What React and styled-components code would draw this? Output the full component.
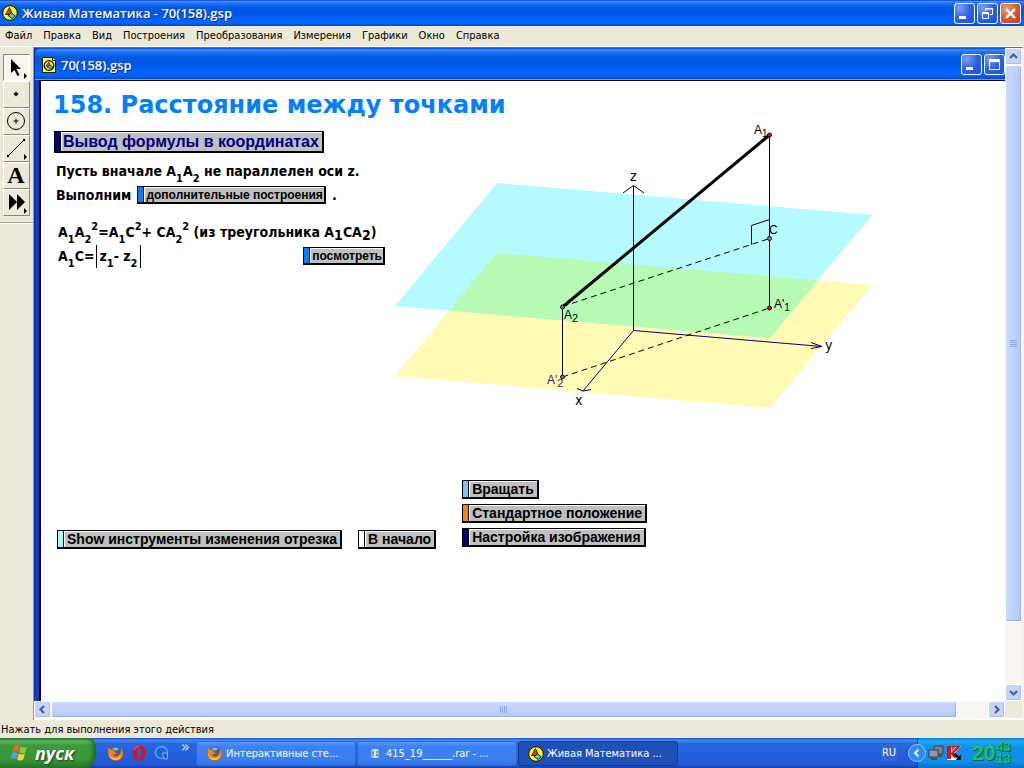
import React from "react";
import styled, { createGlobalStyle, css } from "styled-components";

const ui = '"DejaVu Sans Condensed", "DejaVu Sans", sans-serif';
const caption = '"Open Sans", "Noto Sans", sans-serif';
const arial = '"Liberation Sans", sans-serif';

const GlobalStyle = createGlobalStyle`
  * { box-sizing: border-box; }
  body { margin: 0; background: #ece9d8; font-family: ${ui}; font-size: 11px; color: #000; }
  button { font: inherit; color: inherit; margin: 0; padding: 0; border: 0; background: none; }
  svg { display: block; flex: none; }
`;

const Desktop = styled.div`
  display: flex;
  flex-direction: column;
  min-height: 100vh;
`;

const blueBar = css`
  background: linear-gradient(#0a3fd0 0, #3c90ff 6%, #1a70f4 14%, #0458e4 30%, #0055e5 50%, #0263fb 75%, #0566ff 88%, #0148c8 100%);
`;

const TitleBar = styled.header`
  ${blueBar}
  display: flex;
  align-items: center;
  gap: ${(p) => (p.$child ? 5 : 4)}px;
  height: ${(p) => (p.$child ? 32 : 26)}px;
  padding: ${(p) => (p.$child ? "2px 0 0 7px" : "0 3px 0 2px")};
  border-radius: ${(p) => (p.$child ? "6px 0 0 0" : "0")};
  ${(p) => p.$child && "border-bottom: 1px solid #8a94a8;"}
`;

const Caption = styled.h1`
  flex: 1;
  margin: 0;
  font: 600 13px ${caption};
  color: #fff;
  text-shadow: 1px 1px 0 #0a2a90;
  white-space: nowrap;
`;

const WindowButtons = styled.div`
  display: flex;
  gap: 2px;
`;

const WindowButton = styled.button`
  display: grid;
  place-items: center;
  width: 21px;
  height: 21px;
  border: 1px solid #fff;
  border-radius: 3px;
  background: ${(p) =>
    p.$close
      ? "radial-gradient(circle at 30% 25%, #f09a7c, #e0502c 55%, #c23a16)"
      : "radial-gradient(circle at 25% 20%, #7e9ff2, #2f62e4 50%, #1c50d8)"};
`;

const MenuBar = styled.nav`
  display: flex;
  gap: 11px;
  height: 21px;
  padding: 0 5px 1px;
  border-bottom: 1px solid #fff;
`;

const MenuItem = styled.button`
  line-height: 18px;
`;

const Main = styled.main`
  display: flex;
  flex: 1;
`;

const ToolPanel = styled.aside`
  flex: none;
  width: 34px;
  border-right: 1px solid #9a988c;
`;

const Tools = styled.div`
  display: flex;
  flex-direction: column;
  padding: 7px 3px 6px;
  border-bottom: 1px solid #aca899;
  box-shadow: 0 1px 0 #fff;
`;

const Tool = styled.button`
  width: 27px;
  height: 27px;
  border: 1px solid;
  border-color: #fff #8d8a7c #8d8a7c #fff;
  ${(p) => p.$on && "border-color: #8d8a7c #fff #fff #8d8a7c; background: #f6f5ef;"}
`;

const Workspace = styled.div`
  display: grid;
  grid-template-columns: 1fr 17px;
  grid-template-rows: 1fr 17px;
  flex: 1;
  border-top: 1px solid #716f64;
  border-right: 2px solid #f4f2ea;
  border-bottom: 2px solid #fff;
`;

const ChildWindow = styled.section`
  display: flex;
  flex-direction: column;
  min-width: 0;
  border-left: 1px solid #0831a8;
  background: #1040c0;
`;

const Sketch = styled.div`
  flex: 1;
  margin-left: 4px;
  padding: 8px 12px;
  border-top: 1px solid #000;
  border-left: 2px solid #000018;
  background: #fff;
`;

const Heading = styled.h2`
  margin: 0;
  font: bold 24px/33px "DejaVu Sans", sans-serif;
  color: #0080ff;
`;

const Figure = styled.div`
  display: flex;
  align-items: flex-start;
`;

const Notes = styled.div`
  flex: none;
  width: 342px;
  padding: 8px 10px 0 0;
  font-size: 14px;
  font-weight: bold;
`;

const Line = styled.div`
  display: flex;
  align-items: center;
  justify-content: ${(p) => (p.$spread ? "space-between" : "flex-start")};
  gap: 6px;
  height: 24px;
  padding-left: ${(p) => p.$indent || 3}px;
  margin-top: ${(p) => p.$top || 0}px;
  white-space: nowrap;
`;

const small = css`
  font-size: 11px;
  line-height: 0;
`;
const Sub = styled.sub`
  ${small}
  vertical-align: -6px;
`;
const Sup = styled.sup`
  ${small}
  vertical-align: 7px;
`;
const LowSub = styled.sub`
  font-size: 14px;
  line-height: 0;
  vertical-align: -3px;
`;
const Abs = styled.span`
  display: inline-block;
  margin-left: 2px;
  padding: 3px 2px 4px;
  border: solid #000;
  border-width: 0 1px;
`;

const ActionFrame = styled.button`
  display: inline-flex;
  flex: none;
  border: 1px solid #000;
  border-width: 1px 2px 2px 1px;
  font: bold 14px/15px ${arial};
  ${(p) => p.$size === "large" && "font-size: 16px; line-height: 18px;"}
  ${(p) => p.$size === "small" && "font-size: 12px; line-height: 14px;"}
  color: ${(p) => p.$ink || "#000"};
  white-space: nowrap;
`;
const Strip = styled.span`
  flex: none;
  width: 6px;
  border-right: 1px solid #000;
  background: ${(p) => p.$color};
`;
const Face = styled.span`
  padding: 0 ${(p) => (p.$size === "small" ? 1 : 3)}px 0 ${(p) => (p.$size ? 1 : 2)}px;
  border: solid #fff;
  border-width: 1px 0 0 1px;
  background: #c0c0c0;
`;

const Actions = styled.div`
  display: flex;
  align-items: flex-start;
  gap: 16px;
  padding: 66px 0 0 4px;
`;
const ActionRow = styled.div`
  display: flex;
  gap: 16px;
  padding-top: 50px;
`;
const ActionStack = styled.div`
  display: flex;
  flex-direction: column;
  align-items: flex-start;
  gap: 5px;
  margin-left: 10px;
`;

const ScrollBar = styled.div`
  display: flex;
  flex-direction: ${(p) => (p.$vertical ? "column" : "row")};
  background: #f6f5f0;
`;
const ScrollButton = styled.button`
  display: grid;
  place-items: center;
  flex: none;
  width: 17px;
  height: 17px;
  border: 1px solid #fff;
  border-radius: 2px;
  background: #c6d5fd;
  box-shadow: inset -1px -1px 0 #a8bcf0;
`;
const Thumb = styled.div`
  display: grid;
  place-items: center;
  flex: ${(p) => p.$share} 0 0;
  border: 1px solid #fff;
  border-radius: 2px;
  background: linear-gradient(${(p) => (p.$vertical ? "to right" : "to bottom")}, #cad8ff, #b6caf8);
  box-shadow: inset -1px -1px 0 #98b0e8;
`;
const Track = styled.div`
  flex: ${(p) => p.$share} 0 0;
`;

const StatusBar = styled.footer`
  height: 18px;
  padding: 1px 1px 0;
  line-height: 18px;
`;

const TaskBar = styled.footer`
  display: flex;
  height: 30px;
  background: linear-gradient(#1f4fc0 0, #3f8cf3 8%, #2a66e0 18%, #245edb 60%, #2258d4 88%, #1941a5 100%);
  color: #fff;
`;
const StartButton = styled.button`
  display: flex;
  align-items: center;
  gap: 6px;
  width: 96px;
  padding: 0 0 1px 10px;
  border-radius: 0 8px 12px 0;
  background: linear-gradient(#2f7a2f 0, #63b863 10%, #3c9a3c 25%, #379637 70%, #2a7a2a 100%);
  box-shadow: inset -3px 0 4px #1f6a1f;
  font: italic bold 18px ${caption};
  text-shadow: 1px 1px 2px #1a401a;
`;
const QuickLaunch = styled.div`
  display: flex;
  align-items: center;
  gap: 7px;
  width: 100px;
  padding-left: 11px;
`;
const More = styled.button`
  align-self: flex-start;
  padding-left: 4px;
  font: 16px/18px ${ui};
  color: #cfe0ff;
`;
const Tasks = styled.div`
  display: flex;
  gap: 1px;
  flex: 1;
  padding: 3px 0 2px;
`;
const Task = styled.button`
  display: flex;
  align-items: center;
  gap: 3px;
  width: 160px;
  padding-left: 9px;
  border: 1px solid ${(p) => (p.$on ? "#153c92" : "#3068d8")};
  border-radius: 3px;
  background: ${(p) => (p.$on ? "#1e50b8" : "linear-gradient(#5a96fb, #3c81f3 20%, #3a7df0 80%, #3272e4)")};
  white-space: nowrap;
`;
const Language = styled.button`
  margin: 7px 20px 7px 0;
  padding: 0 1px;
  line-height: 16px;
  background: #3166d4;
`;
const Tray = styled.div`
  display: flex;
  align-items: center;
  gap: 2px;
  width: 107px;
  border-left: 1px solid #0b3a9a;
  background: linear-gradient(#0d7fd0 0, #1aa8f4 10%, #1290e8 30%, #0f8dea 80%, #0b6fc0 100%);
`;
const Expand = styled.button`
  margin-left: -10px;
`;
const Clock = styled.time`
  display: flex;
  align-items: center;
  margin-left: 8px;
  font: bold 21px/24px ${arial};
  color: #18c860;
  text-shadow: 1px 1px 0 #06502c;
`;
const ClockSmall = styled.span`
  display: flex;
  flex-direction: column;
  padding-left: 1px;
  font-size: 13px;
  line-height: 12px;
`;

function Action({ color, size, ink, children }) {
  return (
    <ActionFrame type="button" $size={size} $ink={ink}>
      <Strip $color={color} />
      <Face $size={size}>{children}</Face>
    </ActionFrame>
  );
}

function SketchpadIcon({ size = 16 }) {
  return (
    <svg width={size} height={size} viewBox="0 0 16 16">
      <circle cx="8" cy="8" r="7.3" fill="#ffff20" stroke="#101000" />
      <path d="M7.500 2.500 3.500 9.500h7z" fill="#f03020" stroke="#300" strokeWidth=".8" />
      <path d="M6 10.500 9.500 8l4 3-3.500 2.500z" fill="#30d8d8" stroke="#002020" strokeWidth=".9" />
    </svg>
  );
}

function DocIcon() {
  return (
    <svg width="14" height="16" viewBox="0 0 14 16">
      <path d="M.5.5h10l3 3v12H.5z" fill="#ffff40" stroke="#202000" />
      <path d="M10.500.5v3h3" fill="#fff" stroke="#202000" />
      <circle cx="7" cy="8.500" r="4.800" fill="#f4ee50" stroke="#111" strokeWidth="1.300" />
      <path d="M7 5 4 9h4z" fill="#e05020" stroke="#222" strokeWidth=".7" />
      <path d="M5 10 8 8l3 2-2 2z" fill="#30c8c8" stroke="#022" strokeWidth=".7" />
    </svg>
  );
}

function FirefoxIcon() {
  return (
    <svg width="17" height="17" viewBox="0 0 17 17">
      <circle cx="8.500" cy="8" r="6.500" fill="#2c62b8" />
      <path d="M5 4c2-2 5-2 7 0L9 6z" fill="#79b4ec" />
      <path d="M1.500 2C1 5 .5 9 2.500 12.500 5 17 13 17 15.500 11.500c1-3 .5-6-1.500-8.500 0 3-.2 5-2 7-2 2-5 1.500-6-.5 2 .6 3-.4 4-1.500C7.500 7.500 7 6.500 7.500 5 5.500 5 3 4.500 1.500 2z" fill="#ef8418" stroke="#b64a10" strokeWidth=".5" />
      <path d="M2 6c-.5 7 7 10 12 5-1 6-13 6-12-5z" fill="#ffd048" />
    </svg>
  );
}

function OperaIcon() {
  return (
    <svg width="16" height="16" viewBox="0 0 16 16">
      <path fillRule="evenodd" d="M8 .5c4 0 6.500 3 6.500 7.500s-2.500 7.500-6.500 7.500S1.500 12.500 1.500 8 4 .5 8 .5zM8 3C6.500 3 6 5 6 8s.5 5 2 5 2-2 2-5-.5-5-2-5z" fill="#d8141c" />
      <path d="M3 5c.8-2.500 2.500-3.500 5-3.500" stroke="#ff7a78" fill="none" />
    </svg>
  );
}

function QuickTimeIcon() {
  return (
    <svg width="16" height="16" viewBox="0 0 16 16" fill="none">
      <circle cx="7.500" cy="7.500" r="6" stroke="#48a8ee" strokeWidth="1.500" />
      <path d="M8 8h5.500v6H10z" fill="#2360c8" stroke="#62c0fa" />
      <path d="M4 4l4 4" stroke="#1c58b8" strokeWidth="1.500" />
    </svg>
  );
}

function WindowsLogo() {
  return (
    <svg width="19" height="18" viewBox="0 0 19 18">
      <path d="M4 2c2-1.300 4-1 5.500 0L8 8C6.500 7 4.500 7 2.500 8z" fill="#f0652c" />
      <path d="M10.500 2.500c2 1.200 4 1.200 6.500 0l-1.700 6c-2 1.200-4 1-6.200 0z" fill="#86c840" />
      <path d="M2.200 9c2-1.200 4-1 5.600 0L6.200 15c-2-1.200-3.700-1-5.600 0z" fill="#5c9af0" />
      <path d="M8.800 9.600c2 1.200 4 1.200 6.200 0l-1.600 6c-2.200 1.200-4.200 1.200-6.200 0z" fill="#fcd038" />
    </svg>
  );
}

function ArchiveIcon() {
  return (
    <svg width="16" height="16" viewBox="0 0 16 16">
      <rect x="4" y="3" width="8" height="9" rx="2" fill="#8edcec" />
      <path d="M4 6h8M4 9h8" stroke="#2f8cba" />
      <path d="M8 3v9" stroke="#e8e0c0" strokeWidth="2" />
      <path d="M5 7h2M9 9h2" stroke="#e05838" strokeWidth="1.500" />
    </svg>
  );
}

const glyphs = {
  minimize: <rect x="4" y="12" width="7" height="3" fill="#fff" />,
  restore: (
    <g fill="none" stroke="#fff">
      <path d="M7.500 7V4.500h7v6H12M7 5h8" />
      <path d="M4.500 8.500h6v6h-6zM4 9.500h7" />
    </g>
  ),
  maximize: <path d="M4.500 4.500h10v10h-10zM4 5.500h11M4 6.500h11" fill="none" stroke="#fff" />,
  close: <path d="M5 5l9 9M14 5l-9 9" stroke="#fff" strokeWidth="2.400" />,
};

function WinBtn({ kind, label }) {
  return (
    <WindowButton type="button" aria-label={label} $close={kind === "close"}>
      <svg width="19" height="19" viewBox="0 0 19 19">{glyphs[kind]}</svg>
    </WindowButton>
  );
}

const corner = <path d="M20 18v6l3-3z" />;
const tools = [
  ["Стрелка", <g><path d="M7 4v14l3.500-3 3 6 2-1-3-6H17z" />{corner}</g>],
  ["Точка", <path d="M12 9.500 14.500 12 12 14.500 9.500 12z" />],
  ["Окружность", <g fill="none" stroke="#000"><circle cx="12" cy="12" r="8.500" /><path d="M12 9.500v5M9.500 12h5" /></g>],
  ["Отрезок", <g><path d="M4 20 20 4" stroke="#000" /><circle cx="4" cy="20" r="1.200" /><circle cx="20" cy="4" r="1.200" />{corner}</g>],
  ["Текст", <text x="12" y="20" textAnchor="middle" fontFamily="Liberation Serif, serif" fontWeight="bold" fontSize="24">A</text>],
  ["Инструменты", <g><path d="M5 4v16l8-8zM13 4v16l8-8z" />{corner}</g>],
];

const arrows = {
  up: "M3 8 6.500 4.500 10 8",
  down: "M3 5l3.500 3.500L10 5",
  left: "M8 3 4.500 6.500 8 10",
  right: "M5 3l3.500 3.500L5 10",
};

function Arrow({ dir, label }) {
  return (
    <ScrollButton type="button" aria-label={label}>
      <svg width="13" height="13" viewBox="0 0 13 13">
        <path d={arrows[dir]} fill="none" stroke="#4d6185" strokeWidth="2.200" />
      </svg>
    </ScrollButton>
  );
}

function Grip({ vertical }) {
  return (
    <svg width="9" height="9" viewBox="0 0 9 9">
      <path d={vertical ? "M1 1.500h7M1 3.500h7M1 5.500h7M1 7.500h7" : "M1.500 1v7M3.500 1v7M5.500 1v7M7.500 1v7"} stroke="#8ca6e4" />
    </svg>
  );
}

function Diagram() {
  return (
    <svg width="490" height="292" viewBox="395 122 490 292" fontFamily="Liberation Sans, sans-serif" fontSize="12">
      <path d="M497 253 872 285 770 408 395 376z" fill="#fffbb4" />
      <path d="M497 183 872 215 770 338 395 306z" fill="#b4faff" />
      <path d="M497 253 818 280.400 770 338 449 310.600z" fill="#b6fab4" />
      <g fill="none" stroke="#000070">
        <path d="M633.500 186v144.500L822 346.500M633.500 330.500 583 391" />
        <path d="M623 193l10.500-7.500 10.500 7.500M811 342.500l11 4-11 2M577 388.500l6 2.500 8-1.500" />
      </g>
      <g fill="none" stroke="#000">
        <path d="M769.500 135v173M562.500 307v70M751.500 244.500v-19l18-6" />
        <path d="M562.500 306.500 769.500 238.500M562.500 377 769.500 308" strokeDasharray="6 4" />
        <path d="M562.500 307 769.500 135" strokeWidth="3" />
      </g>
      <g stroke="#200010">
        <circle cx="769.500" cy="135" r="2" fill="#e01020" />
        <circle cx="769.500" cy="308" r="2" fill="#e01020" />
        <circle cx="769.500" cy="238.500" r="2" fill="#8080e0" />
        <circle cx="562.500" cy="307" r="2" fill="#7070c0" />
        <circle cx="562.500" cy="377" r="2" fill="#7070c0" />
      </g>
      <text x="754" y="134">A<tspan dy="3" fontSize="10">1</tspan></text>
      <text x="769" y="234">C</text>
      <text x="774" y="308">A'<tspan dy="3" fontSize="10">1</tspan></text>
      <text x="564" y="319">A<tspan dy="3" fontSize="11">2</tspan></text>
      <text x="547" y="384" fill="#70104c">A'<tspan dy="3" fontSize="11">2</tspan></text>
      <g fontFamily="DejaVu Sans Condensed, DejaVu Sans, sans-serif" fontSize="14">
        <text x="630" y="181">z</text>
        <text x="825" y="350">y</text>
        <text x="575" y="405">x</text>
      </g>
    </svg>
  );
}

const menu = ["Файл", "Правка", "Вид", "Построения", "Преобразования", "Измерения", "Графики", "Окно", "Справка"];

export default function App() {
  return (
    <Desktop>
      <GlobalStyle />
      <TitleBar>
        <SketchpadIcon />
        <Caption>Живая Математика - 70(158).gsp</Caption>
        <WindowButtons>
          <WinBtn kind="minimize" label="Свернуть" />
          <WinBtn kind="restore" label="Восстановить" />
          <WinBtn kind="close" label="Закрыть" />
        </WindowButtons>
      </TitleBar>
      <MenuBar>
        {menu.map((m) => <MenuItem key={m} type="button">{m}</MenuItem>)}
      </MenuBar>
      <Main>
        <ToolPanel>
          <Tools>
            {tools.map(([name, art], i) => (
              <Tool key={name} type="button" aria-label={name} $on={i === 0}>
                <svg width="25" height="25" viewBox="0 0 25 25">{art}</svg>
              </Tool>
            ))}
          </Tools>
        </ToolPanel>
        <Workspace>
          <ChildWindow>
            <TitleBar $child as="div">
              <DocIcon />
              <Caption as="h2">70(158).gsp</Caption>
              <WindowButtons>
                <WinBtn kind="minimize" label="Свернуть документ" />
                <WinBtn kind="maximize" label="Развернуть документ" />
              </WindowButtons>
            </TitleBar>
            <Sketch>
              <Heading>158. Расстояние между точками</Heading>
              <Figure>
                <Notes>
                  <Line $indent={1}><Action color="#000080" ink="#000080" size="large">Вывод формулы в координатах</Action></Line>
                  <Line $top={5}><span>Пусть вначале A<Sub>1</Sub>A<Sub>2</Sub> не параллелен оси z.</span></Line>
                  <Line>
                    <span>Выполним</span>
                    <Action color="#0080ff" size="small">дополнительные построения</Action>
                    <span>.</span>
                  </Line>
                  <Line $top={13} $indent={5}>
                    <span>A<Sub>1</Sub>A<Sub>2</Sub><Sup>2</Sup>=A<Sub>1</Sub>C<Sup>2</Sup>+ CA<Sub>2</Sub><Sup>2</Sup> (из треугольника A<LowSub>1</LowSub>CA<LowSub>2</LowSub>)</span>
                  </Line>
                  <Line $spread $indent={5}>
                    <span>A<Sub>1</Sub>C=<Abs>z<Sub>1</Sub>- z<Sub>2</Sub></Abs></span>
                    <Action color="#0080ff" size="small">посмотреть</Action>
                  </Line>
                </Notes>
                <Diagram />
              </Figure>
              <Actions>
                <ActionRow>
                  <Action color="#a0ffff">Show инструменты изменения отрезка</Action>
                  <Action color="#ffffff">В начало</Action>
                </ActionRow>
                <ActionStack>
                  <Action color="#80c0ff">Вращать</Action>
                  <Action color="#ff8000">Стандартное положение</Action>
                  <Action color="#000080">Настройка изображения</Action>
                </ActionStack>
              </Actions>
            </Sketch>
          </ChildWindow>
          <ScrollBar $vertical>
            <Arrow dir="up" label="Прокрутить вверх" />
            <Thumb $vertical $share={90}><Grip vertical /></Thumb>
            <Track $share={10} />
            <Arrow dir="down" label="Прокрутить вниз" />
          </ScrollBar>
          <ScrollBar>
            <Arrow dir="left" label="Прокрутить влево" />
            <Thumb $share={29}><Grip /></Thumb>
            <Track $share={1} />
            <Arrow dir="right" label="Прокрутить вправо" />
          </ScrollBar>
        </Workspace>
      </Main>
      <StatusBar>Нажать для выполнения этого действия</StatusBar>
      <TaskBar>
        <StartButton type="button"><WindowsLogo />пуск</StartButton>
        <QuickLaunch>
          <FirefoxIcon />
          <OperaIcon />
          <QuickTimeIcon />
          <More type="button" aria-label="Ещё">»</More>
        </QuickLaunch>
        <Tasks>
          <Task type="button"><FirefoxIcon />Интерактивные сте...</Task>
          <Task type="button"><ArchiveIcon />415_19______.rar - ...</Task>
          <Task type="button" $on><SketchpadIcon />Живая Математика ...</Task>
        </Tasks>
        <Language type="button">RU</Language>
        <Tray>
          <Expand type="button" aria-label="Показать скрытые значки">
            <svg width="18" height="18" viewBox="0 0 18 18">
              <circle cx="9" cy="9" r="8.500" fill="#2c8cf0" stroke="#8cc8ff" />
              <path d="M10.500 5.500 7 9l3.500 3.500" fill="none" stroke="#fff" strokeWidth="2" />
            </svg>
          </Expand>
          <svg width="16" height="16" viewBox="0 0 16 16">
            <path d="M6 1h9v8H6z" fill="#7c8288" stroke="#394048" />
            <path d="M1 5h9v7H1z" fill="#929aa0" stroke="#394048" />
            <path d="M3 14h6M11 11h3" stroke="#444c54" strokeWidth="2" />
          </svg>
          <svg width="16" height="16" viewBox="0 0 16 16">
            <path d="M1 1h4.500v6l5-6H15L8.500 8.500 12 13v2H1z" fill="#fff" />
            <path d="M2 2h3v6l5.500-6H14L8 8l3.500 5H8.500L5 9.500V14H2z" fill="#e01010" />
            <path d="M1 1.500h13M1.500 1v13" stroke="#e01010" />
            <path d="M9 8l4 3.500 2-2V15H9.500l2-2L7.500 9.500z" fill="#000" />
          </svg>
          <Clock>20<ClockSmall><span>43</span><span>13</span></ClockSmall></Clock>
        </Tray>
      </TaskBar>
    </Desktop>
  );
}
